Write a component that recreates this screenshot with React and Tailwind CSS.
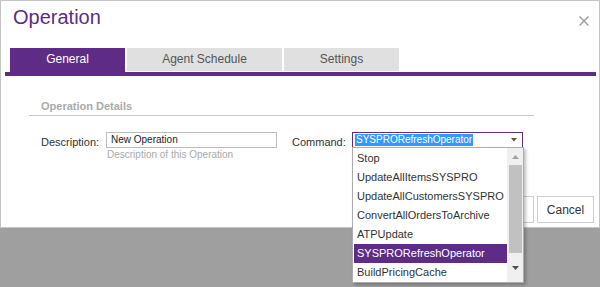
import React from "react";

const items = [
  "Stop",
  "UpdateAllItemsSYSPRO",
  "UpdateAllCustomersSYSPRO",
  "ConvertAllOrdersToArchive",
  "ATPUpdate",
  "SYSPRORefreshOperator",
  "BuildPricingCache",
];

export default function App() {
  return (
    <div className="relative w-[600px] h-[287px] overflow-hidden bg-[#9f9f9f] font-['Liberation_Sans',Arial,sans-serif]">
      {/* Dialog */}
      <div className="flex flex-col w-[600px] h-[228px] bg-white border border-[#c4c4c4]">
        {/* Header */}
        <div className="flex items-start justify-between h-[47px] pl-[12px] pr-[10px]">
          <div className="pt-[4px] text-[20px] leading-[24px] text-[#5c2d85]">Operation</div>
          <svg className="mt-[15px]" width="10" height="10" viewBox="0 0 10 10">
            <path d="M0.5 0.5 L9.5 9.5 M9.5 0.5 L0.5 9.5" stroke="#999" strokeWidth="1.4" fill="none" />
          </svg>
        </div>

        {/* Tabs */}
        <div className="ml-[4px] mr-[3px]">
          <div className="flex items-start gap-[2px] pl-[5px] h-[24px]">
            <div className="w-[115px] h-[24px] bg-[#5e2c86] text-white text-[12px] leading-[23px] text-center">
              General
            </div>
            <div className="w-[155px] h-[23px] bg-[#e0e0e0] text-[#555] text-[12px] leading-[23px] text-center">
              Agent Schedule
            </div>
            <div className="w-[115px] h-[23px] bg-[#e0e0e0] text-[#555] text-[12px] leading-[23px] text-center">
              Settings
            </div>
          </div>
          <div className="h-[4px] bg-[#5e2c86]"></div>
        </div>

        {/* Section header */}
        <div className="ml-[28px] w-[505px] pt-[24px] pb-[2px] pl-[12px] border-b border-[#c8c8c8] text-[11px] leading-[13px] font-bold text-[#aaaaaa]">
          Operation Details
        </div>

        {/* Form row */}
        <div className="flex items-start ml-[40px] mt-[16px]">
          <div className="w-[65px] mt-[2px] text-[11px] leading-[16px] text-[#333]">Description:</div>
          <div className="flex flex-col">
            <div className="w-[171px] h-[16px] border border-[#bdbdbd] pl-[4px] text-[10px] leading-[14px] text-[#222]">
              New Operation
            </div>
            <div className="mt-[1px] ml-[1px] text-[10px] leading-[12px] text-[#aaaaaa]">
              Description of this Operation
            </div>
          </div>
          <div className="w-[60px] ml-[15px] mt-[2px] text-[11px] leading-[16px] text-[#333]">Command:</div>
          <div className="flex items-center w-[171px] h-[16px] border border-[#5e2c86] pl-[2px] pr-[5px]">
            <span className="px-[1px] bg-[#3399ff] text-white text-[10px] leading-[12px]">SYSPRORefreshOperator</span>
            <svg className="ml-auto" width="6" height="4" viewBox="0 0 6 4">
              <path d="M0 0 L6 0 L3 3.5 Z" fill="#555" />
            </svg>
          </div>
        </div>

        {/* Footer */}
        <div className="mt-auto flex justify-end gap-[3px] pr-[5px] pb-[4px]">
          <div className="flex items-center justify-center w-[60px] h-[27px] border border-[#cfcfcf] bg-white text-[12px] text-[#333]">
            Save
          </div>
          <div className="flex items-center justify-center w-[57px] h-[27px] border border-[#cfcfcf] bg-white text-[12px] text-[#333]">
            Cancel
          </div>
        </div>
      </div>

      {/* Dropdown list */}
      <div className="absolute left-[352px] top-[147px] flex w-[172px] h-[136px] bg-white border border-[#acacac] shadow-[2px_2px_3px_rgba(0,0,0,0.25)]">
        <div className="w-[155px] pt-[1px] pl-[1px]">
          {items.map((it) => (
            <div
              key={it}
              className={
                it === "SYSPRORefreshOperator"
                  ? "h-[19px] w-[153px] pl-[3px] text-[11px] leading-[19px] bg-[#5e2c86] text-white whitespace-nowrap overflow-hidden"
                  : "h-[19px] w-[153px] pl-[3px] text-[11px] leading-[19px] text-[#333] whitespace-nowrap overflow-hidden"
              }
            >
              {it}
            </div>
          ))}
        </div>
        <div className="flex flex-col w-[16px] bg-[#f0f0f0]">
          <div className="flex items-center justify-center h-[17px]">
            <svg width="7" height="4" viewBox="0 0 7 4">
              <path d="M0 4 L7 4 L3.5 0 Z" fill="#a3a3a3" />
            </svg>
          </div>
          <div className="ml-[2px] w-[13px] h-[88px] bg-[#c1c1c1]"></div>
          <div className="flex items-center justify-center flex-1">
            <svg width="7" height="4" viewBox="0 0 7 4">
              <path d="M0 0 L7 0 L3.5 4 Z" fill="#505050" />
            </svg>
          </div>
        </div>
      </div>
    </div>
  );
}
